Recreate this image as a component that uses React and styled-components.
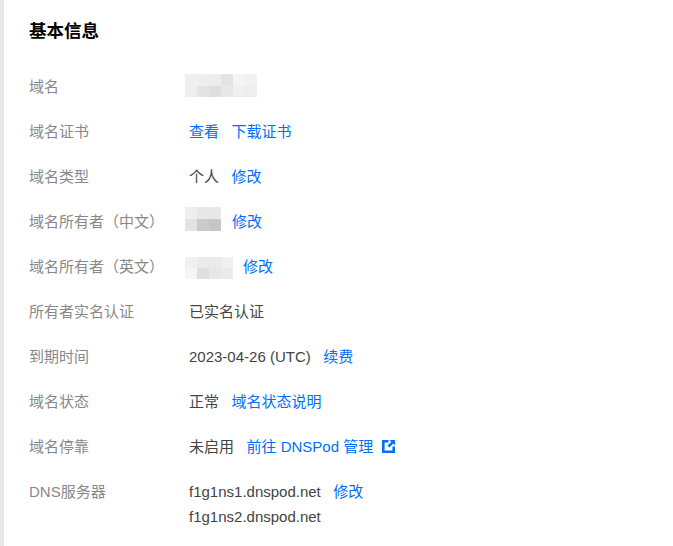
import styled, { createGlobalStyle } from "styled-components";

const GlobalStyle = createGlobalStyle`
  html, body {
    margin: 0;
    padding: 0;
    height: 100%;
    overflow: hidden;
    background: #fff;
    font-family: "Liberation Sans", Arial, "Noto Sans CJK SC", sans-serif;
  }
`;

const Page = styled.div`
  height: 546px;
  box-sizing: border-box;
  border-left: 4px solid #e8e8e8;
  padding: 19px 0 0 25px;
  overflow: hidden;
`;

const Title = styled.h2`
  margin: 0 0 31px;
  font-size: 17.5px;
  line-height: 24px;
  font-weight: 700;
  color: #000;
`;

const Row = styled.div`
  display: flex;
  align-items: flex-start;
  min-height: 45px;
  font-size: 15px;
  line-height: 25px;
`;

const Label = styled.div`
  width: 160px;
  flex: none;
  color: #888;
`;

const Value = styled.div`
  display: flex;
  align-items: center;
  color: #444;
`;

const Text = styled.span`
  color: #444;
  margin-right: 12.5px;
`;

const Link = styled.a`
  color: #006eff;
  text-decoration: none;
  margin-right: ${(p) => p.$gap || 0}px;
  display: inline-flex;
  align-items: center;
`;

const Servers = styled.div`
  display: flex;
  flex-direction: column;
`;

const Mosaic = styled.div`
  display: grid;
  grid-template-columns: repeat(${(p) => p.$cols}, 12px);
  grid-auto-rows: ${(p) => p.$cell}px;
  margin: ${(p) => p.$top}px ${(p) => p.$gap}px 0 -4px;
`;

const Cell = styled.i`
  display: block;
  background: ${(p) => p.$c};
`;

const Blur = ({ colors, cols, gap, cell = 11.5, top = 0 }) => (
  <Mosaic $cols={cols} $gap={gap} $cell={cell} $top={top}>
    {colors.map((c, i) => (
      <Cell key={i} $c={c} />
    ))}
  </Mosaic>
);

const ExternalIcon = () => (
  <svg width="13" height="13" viewBox="0 0 13 13" style={{ marginLeft: 9 }}>
    <path fill="#006eff" d="M0 0h6.5v2.6H2.6v7.8h7.8V6.5H13V13H0z" />
    <path fill="#006eff" d="M7.5 0H13v5.5l-1.9-1.9-3.7 3.9-1.9-1.9 3.9-3.7z" />
  </svg>
);

const App = () => {
  return (
    <>
      <GlobalStyle />
      <Page>
        <Title>基本信息</Title>
        <Row>
          <Label>域名</Label>
          <Value>
            <Blur
              cols={6}
              gap={0}
              colors={["#f0f0f0", "#eeeeee", "#ededed", "#e4e4e4", "#f4f4f4", "#f1f1f1", "#eeeeee", "#e4e4e4", "#dfdfdf", "#e8e8e8", "#f0f0f0", "#eeeeee"]}
            />
          </Value>
        </Row>
        <Row>
          <Label>域名证书</Label>
          <Value>
            <Link $gap={12.5}>查看</Link>
            <Link>下载证书</Link>
          </Value>
        </Row>
        <Row>
          <Label>域名类型</Label>
          <Value>
            <Text>个人</Text>
            <Link>修改</Link>
          </Value>
        </Row>
        <Row>
          <Label>域名所有者（中文）</Label>
          <Value>
            <Blur
              cols={3}
              gap={11}
              cell={12}
              top={-5}
              colors={["#eeeeee", "#e6e8e8", "#e8e8e8", "#e4e3e1", "#cccbc8", "#c6c6c8"]}
            />
            <Link>修改</Link>
          </Value>
        </Row>
        <Row>
          <Label>域名所有者（英文）</Label>
          <Value>
            <Blur
              cols={4}
              gap={10}
              cell={11}
              top={2}
              colors={["#f0f0f0", "#ebebeb", "#eaeaea", "#f0f0f0", "#f5f5f3", "#dfdfdf", "#e8e6e6", "#eaecec"]}
            />
            <Link>修改</Link>
          </Value>
        </Row>
        <Row>
          <Label>所有者实名认证</Label>
          <Value>已实名认证</Value>
        </Row>
        <Row>
          <Label>到期时间</Label>
          <Value>
            <Text>2023-04-26 (UTC)</Text>
            <Link>续费</Link>
          </Value>
        </Row>
        <Row>
          <Label>域名状态</Label>
          <Value>
            <Text>正常</Text>
            <Link>域名状态说明</Link>
          </Value>
        </Row>
        <Row>
          <Label>域名停靠</Label>
          <Value>
            <Text>未启用</Text>
            <Link>
              前往 DNSPod 管理
              <ExternalIcon />
            </Link>
          </Value>
        </Row>
        <Row>
          <Label>DNS服务器</Label>
          <Servers>
            <Value>
              <Text>f1g1ns1.dnspod.net</Text>
              <Link>修改</Link>
            </Value>
            <Value>f1g1ns2.dnspod.net</Value>
          </Servers>
        </Row>
      </Page>
    </>
  );
};

export default App;
